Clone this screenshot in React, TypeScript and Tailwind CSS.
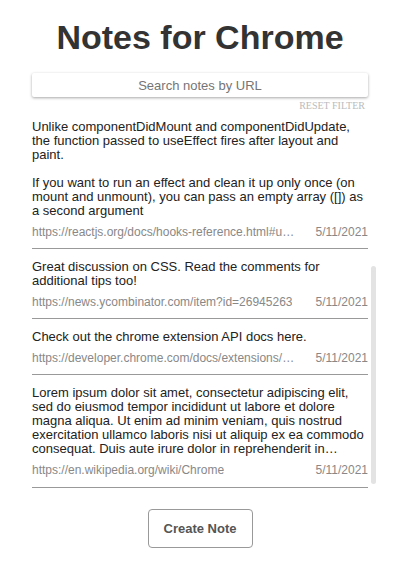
const NOTES = [
  {
    text: 'Unlike componentDidMount and componentDidUpdate, the function passed to useEffect fires after layout and paint.\n\nIf you want to run an effect and clean it up only once (on mount and unmount), you can pass an empty array ([]) as a second argument',
    url: 'https://reactjs.org/docs/hooks-reference.html#useeffect',
    date: '5/11/2021',
  },
  {
    text: 'Great discussion on CSS. Read the comments for additional tips too!',
    url: 'https://news.ycombinator.com/item?id=26945263',
    date: '5/11/2021',
  },
  {
    text: 'Check out the chrome extension API docs here.',
    url: 'https://developer.chrome.com/docs/extensions/reference/',
    date: '5/11/2021',
  },
  {
    text: 'Lorem ipsum dolor sit amet, consectetur adipiscing elit, sed do eiusmod tempor incididunt ut labore et dolore magna aliqua. Ut enim ad minim veniam, quis nostrud exercitation ullamco laboris nisi ut aliquip ex ea commodo consequat. Duis aute irure dolor in reprehenderit in voluptate velit esse cillum dolore eu fugiat nulla pariatur.',
    url: 'https://en.wikipedia.org/wiki/Chrome',
    date: '5/11/2021',
  },
];

export default function App() {
  return (
    <div
      className="w-[400px] h-[570px] bg-white flex flex-col items-center"
      style={{ fontFamily: '"Liberation Sans", Arial, sans-serif' }}
    >
      <h1 className="mt-[15px] text-[34px] leading-[44px] font-bold text-[#333]">
        Notes for Chrome
      </h1>

      {/* search */}
      <div className="mt-[14px] w-[336px] flex flex-col">
        <input
          placeholder="Search notes by URL"
          className="h-[24px] w-full rounded-[2px] bg-white text-center text-[13px] text-[#333] placeholder:text-[#757575] shadow-[0_1px_3px_rgba(0,0,0,0.35)] outline-none"
        />
        <span
          className="self-end mr-[3px] mt-[3px] text-[10px] leading-[12px] uppercase text-[#bbb]"
          style={{ fontFamily: '"Liberation Serif", serif' }}
        >
          Reset filter
        </span>
      </div>

      {/* notes list */}
      <div className="relative w-[336px] mt-[1px]">
        {NOTES.map((n, i) => (
          <div
            key={i}
            className={
              i === NOTES.length - 1
                ? 'pt-[7px] pb-[10px] border-b border-[#999]'
                : 'pt-[7px] pb-[9px] border-b border-[#999] mb-[4px]'
            }
          >
            <p
              className={
                i === NOTES.length - 1
                  ? 'text-[13px] leading-[14px] text-[#222] line-clamp-5'
                  : 'text-[13px] leading-[14px] text-[#222] whitespace-pre-wrap'
              }
            >
              {n.text}
            </p>
            <div className="mt-[7px] flex justify-between gap-[20px] text-[12px] leading-[14px] text-[#888]">
              <span className="truncate">{n.url}</span>
              <span className="shrink-0">{n.date}</span>
            </div>
          </div>
        ))}
        <div className="absolute right-[-8px] bottom-[4px] w-[5px] h-[218px] rounded-full bg-[#e3e3e3]" />
      </div>

      <button className="mt-[21px] w-[105px] h-[39px] rounded-[4px] border border-[#999] text-[13px] font-bold text-[#555]">
        Create Note
      </button>
    </div>
  );
}
